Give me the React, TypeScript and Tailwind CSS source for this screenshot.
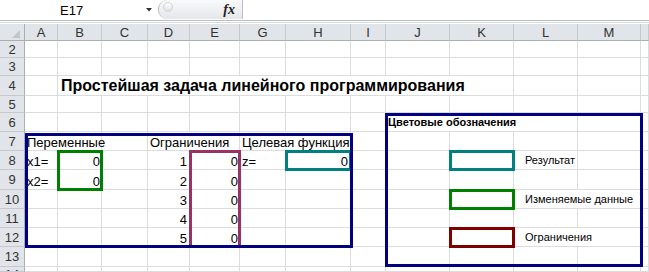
import React from "react";

const GRID =
  "grid grid-cols-[25px_33px_44px_46px_42px_50px_46px_65px_35px_64px_64px_64px_63px_8px] grid-rows-[17px_17px_18px_20px_17px_19px_19px_19px_20px_19px_19px_19px_20px_5px]";

const headerCols = ["", "A", "B", "C", "D", "E", "G", "H", "I", "J", "K", "L", "M", ""];
const rowNums = [2, 3, 4, 5, 6, 7, 8, 9, 10, 11, 12, 13, 14];

function GridLayer() {
  const cells: React.ReactNode[] = [];
  headerCols.forEach((c, i) => {
    if (i === 0) {
      cells.push(
        <div
          key="corner"
          className="bg-[#e1e4e8] border-r border-b border-r-[#a9aeb4] border-b-[#a9aeb4] flex items-end justify-end pr-[4px] pb-[2px]"
        >
          <svg width="8" height="8" viewBox="0 0 8 8">
            <polygon points="8,0 8,8 0,8" fill="#c2c6cb" />
          </svg>
        </div>
      );
    } else {
      cells.push(
        <div
          key={"h" + i}
          className="bg-[#e1e4e8] border-r border-b border-r-[#c5c9ce] border-b-[#a9aeb4] flex items-center justify-center text-[13px] leading-[15px] text-[#333]"
        >
          {c}
        </div>
      );
    }
  });
  rowNums.forEach((r) => {
    cells.push(
      <div
        key={"r" + r}
        className={
          "bg-[#e1e4e8] border-r border-b border-r-[#a9aeb4] border-b-[#c5c9ce] flex justify-center overflow-hidden text-[13px] leading-[15px] text-[#333] " +
          (r === 14 ? "items-start" : "items-center")
        }
      >
        {r}
      </div>
    );
    for (let i = 1; i < 14; i++) {
      cells.push(<div key={"c" + r + "-" + i} className="border-r border-b border-[#dadcdd]" />);
    }
  });
  return <div className={GRID + " col-start-1 row-start-1"}>{cells}</div>;
}

const txt = "flex items-end whitespace-nowrap text-[13px] leading-[15px] mr-px mb-px bg-white text-black";
const lg = "flex items-end whitespace-nowrap text-[11px] leading-[13px] mr-px mb-px pb-[2px] bg-white text-black";
const box = "-m-px border-[3px]";

function ContentLayer() {
  return (
    <div className={GRID + " col-start-1 row-start-1"}>
      {/* title */}
      <div className="col-[3/12] row-[4/5] flex items-end whitespace-nowrap text-[16px] leading-[18px] font-bold mr-px mb-px bg-white pl-[3px] text-black">
        Простейшая задача линейного программирования
      </div>

      {/* table texts */}
      <div className={txt + " col-[2/4] row-[7/8] pl-[2px]"}>Переменные</div>
      <div className={txt + " col-[5/7] row-[7/8] pl-[2px]"}>Ограничения</div>
      <div className={txt + " col-[7/9] row-[7/8] pl-[2px]"}>Целевая функция</div>

      <div className={txt + " col-[2/3] row-[8/9] pl-[2px]"}>x1=</div>
      <div className={txt + " col-[2/3] row-[9/10] pl-[2px]"}>x2=</div>
      <div className={txt + " col-[3/4] row-[8/9] justify-end pr-px"}>0</div>
      <div className={txt + " col-[3/4] row-[9/10] justify-end pr-px"}>0</div>

      <div className={txt + " col-[5/6] row-[8/9] justify-end pr-[2px]"}>1</div>
      <div className={txt + " col-[5/6] row-[9/10] justify-end pr-[2px]"}>2</div>
      <div className={txt + " col-[5/6] row-[10/11] justify-end pr-[2px]"}>3</div>
      <div className={txt + " col-[5/6] row-[11/12] justify-end pr-[2px]"}>4</div>
      <div className={txt + " col-[5/6] row-[12/13] justify-end pr-[2px]"}>5</div>

      <div className={txt + " col-[6/7] row-[8/9] justify-end pr-px"}>0</div>
      <div className={txt + " col-[6/7] row-[9/10] justify-end pr-px"}>0</div>
      <div className={txt + " col-[6/7] row-[10/11] justify-end pr-px"}>0</div>
      <div className={txt + " col-[6/7] row-[11/12] justify-end pr-px"}>0</div>
      <div className={txt + " col-[6/7] row-[12/13] justify-end pr-px"}>0</div>

      <div className={txt + " col-[7/8] row-[8/9] pl-[2px]"}>z=</div>
      <div className={txt + " col-[8/9] row-[8/9] justify-end pr-[2px]"}>0</div>

      {/* legend texts */}
      <div className={lg + " col-[10/13] row-[6/7] pl-[2px] font-bold"}>Цветовые обозначения</div>
      <div className={lg + " col-[12/13] row-[8/9] pl-[11px]"}>Результат</div>
      <div className={lg + " col-[12/14] row-[10/11] pl-[11px]"}>Изменяемые данные</div>
      <div className={lg + " col-[12/14] row-[12/13] pl-[11px]"}>Ограничения</div>

      {/* colored boxes */}
      <div className={box + " col-[3/4] row-[8/10] border-[#008000]"} />
      <div className={box + " col-[6/7] row-[8/13] border-[#993366]"} />
      <div className={box + " col-[8/9] row-[8/9] border-[#008080]"} />

      <div className={box + " col-[11/12] row-[8/9] border-[#008080]"} />
      <div className={box + " col-[11/12] row-[10/11] border-[#008000]"} />
      <div className={box + " col-[11/12] row-[12/13] border-[#800000]"} />

      {/* navy frames */}
      <div className="col-[2/9] row-[7/13] border-[3px] border-[#000080] mr-[-2px] mb-[-1px] mt-px" />
      <div className="col-[10/14] row-[6/14] border-[3px] border-[#000080] -ml-px mr-[-2px] mb-0" />
    </div>
  );
}

function FormulaBar() {
  return (
    <div className="h-[20px] flex bg-white">
      <div className="w-[158px] h-full flex items-center">
        <span className="ml-[60px] text-[13px] leading-[15px] text-black">E17</span>
        <svg className="ml-auto mr-[6px]" width="6" height="4" viewBox="0 0 6 4">
          <polygon points="0,0 6,0 3,3.5" fill="#333" />
        </svg>
      </div>
      <div className="w-[85px] h-[19px] flex items-start rounded-l-[9px] border-l border-r border-[#b9bec4] bg-gradient-to-b from-[#f9fafb] to-[#e4e7ea]">
        <div className="ml-[4px] mt-[2px] w-[10px] h-[10px] rounded-full border border-[#d0d3d7] bg-gradient-to-b from-[#ffffff] to-[#dde0e3]" />
        <span className="ml-auto mr-[7px] mt-[2px] font-['Liberation_Serif',serif] italic font-bold text-[14px] leading-[15px] text-[#222]">
          fx
        </span>
      </div>
      <div className="flex-1" />
    </div>
  );
}

export default function App() {
  return (
    <div className="w-[649px] h-[272px] overflow-hidden bg-white font-['Liberation_Sans',Arial,sans-serif]">
      <FormulaBar />
      <div className="h-px bg-[#b9bdc2]" />
      <div className="h-px bg-white" />
      <div className="h-px bg-[#d6d9dd]" />
      <div className="h-px bg-white" />
      <div className="grid h-[248px] overflow-hidden">
        <GridLayer />
        <ContentLayer />
      </div>
    </div>
  );
}
